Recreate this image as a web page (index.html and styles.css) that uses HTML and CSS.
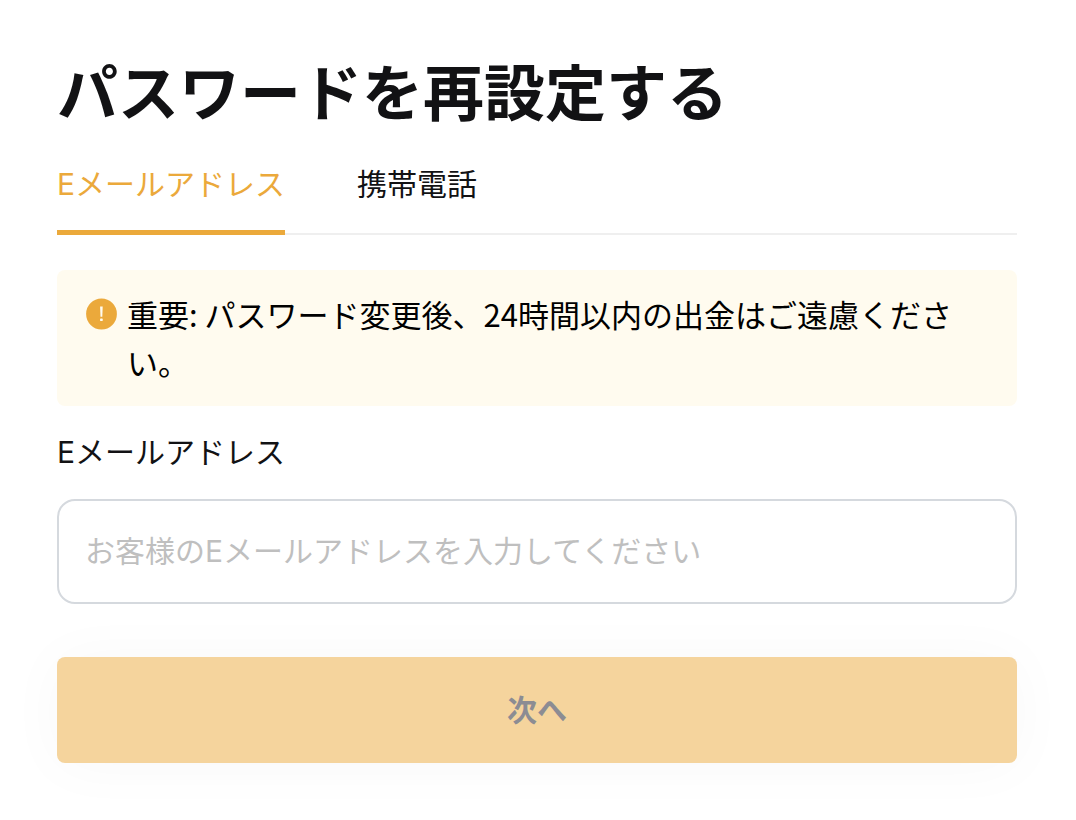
FILE: index.html
```html
<!DOCTYPE html>
<html lang="ja">
<head>
  <meta charset="UTF-8" />
  <meta name="viewport" content="width=device-width, initial-scale=1" />
  <title>パスワードを再設定する</title>
  <link rel="stylesheet" href="styles.css">
</head>
<body>

  <h1>パスワードを再設定する</h1>

  <div class="tabs" role="tablist">
    <button type="button" class="tab active" role="tab" aria-selected="true">Eメールアドレス</button>
    <button type="button" class="tab" role="tab" aria-selected="false">携帯電話</button>
  </div>

  <div class="notice">
    <svg class="notice-icon" viewBox="0 0 32 32" aria-hidden="true">
      <circle cx="16.5" cy="16" r="15.4" fill="#eba93b" />
      <path d="M15.1 8.5h2.6l-.4 10.2h-1.8z" fill="#fffbf0" />
      <rect x="15.1" y="20.6" width="2.6" height="2.4" rx=".6" fill="#fffbf0" />
    </svg>
    <p>重要: パスワード変更後、24時間以内の出金はご遠慮ください。</p>
  </div>

  <form id="reset-form" onsubmit="return false;">
    <label for="email">Eメールアドレス</label>
    <input type="email" id="email" placeholder="お客様のEメールアドレスを入力してください" />
    <button class="submit-btn" disabled>次へ</button>
  </form>

</body>
</html>
```

FILE: styles.css
```css
* {
  box-sizing: border-box;
}

body {
  margin: 0;
  padding: 50px 59px 56px 57px;
  font-family: Inter, "Noto Sans CJK JP", sans-serif;
  font-size: 30px;
  background: #fff;
  color: #121214;
}

h1 {
  margin: 0;
  font-size: 61px;
  line-height: 88px;
  font-weight: bold;
}

.tabs {
  display: flex;
  gap: 72px;
  margin-top: 22px;
  border-bottom: 2px solid #efefef;
}

.tab {
  margin-bottom: -2px;
  padding: 0 0 22px;
  border: none;
  border-bottom: 5px solid transparent;
  background: none;
  font: inherit;
  line-height: 48px;
  color: inherit;
  cursor: pointer;
}

.tab.active {
  color: #eba93b;
  border-bottom-color: #eba93b;
}

.notice {
  display: flex;
  gap: 10px;
  margin-top: 35px;
  padding: 20px 28px;
  border-radius: 8px;
  background: #fffbef;
  color: #000;
}

.notice-icon {
  flex: none;
  width: 32px;
  height: 32px;
  margin-top: 8px;
}

.notice p {
  margin: 0;
  font-family: "Noto Sans CJK JP", sans-serif;
  font-size: 31px;
  line-height: 48px;
}

label {
  display: block;
  margin: 24px 0;
  line-height: 45px;
}

input {
  display: block;
  width: 100%;
  height: 105px;
  padding: 0 26px 2px;
  border: 2px solid #d5d9de;
  border-radius: 18px;
  font: inherit;
  color: inherit;
}

input::placeholder {
  color: #bfbfbf;
}

.submit-btn {
  display: block;
  width: 100%;
  height: 106px;
  margin-top: 53px;
  padding: 0 0 4px;
  border: none;
  border-radius: 8px;
  background: #f5d49d;
  box-shadow: 0 2px 60px rgba(0, 0, 0, 0.03);
  font: inherit;
  font-weight: bold;
  color: #8c8c93;
}
```
